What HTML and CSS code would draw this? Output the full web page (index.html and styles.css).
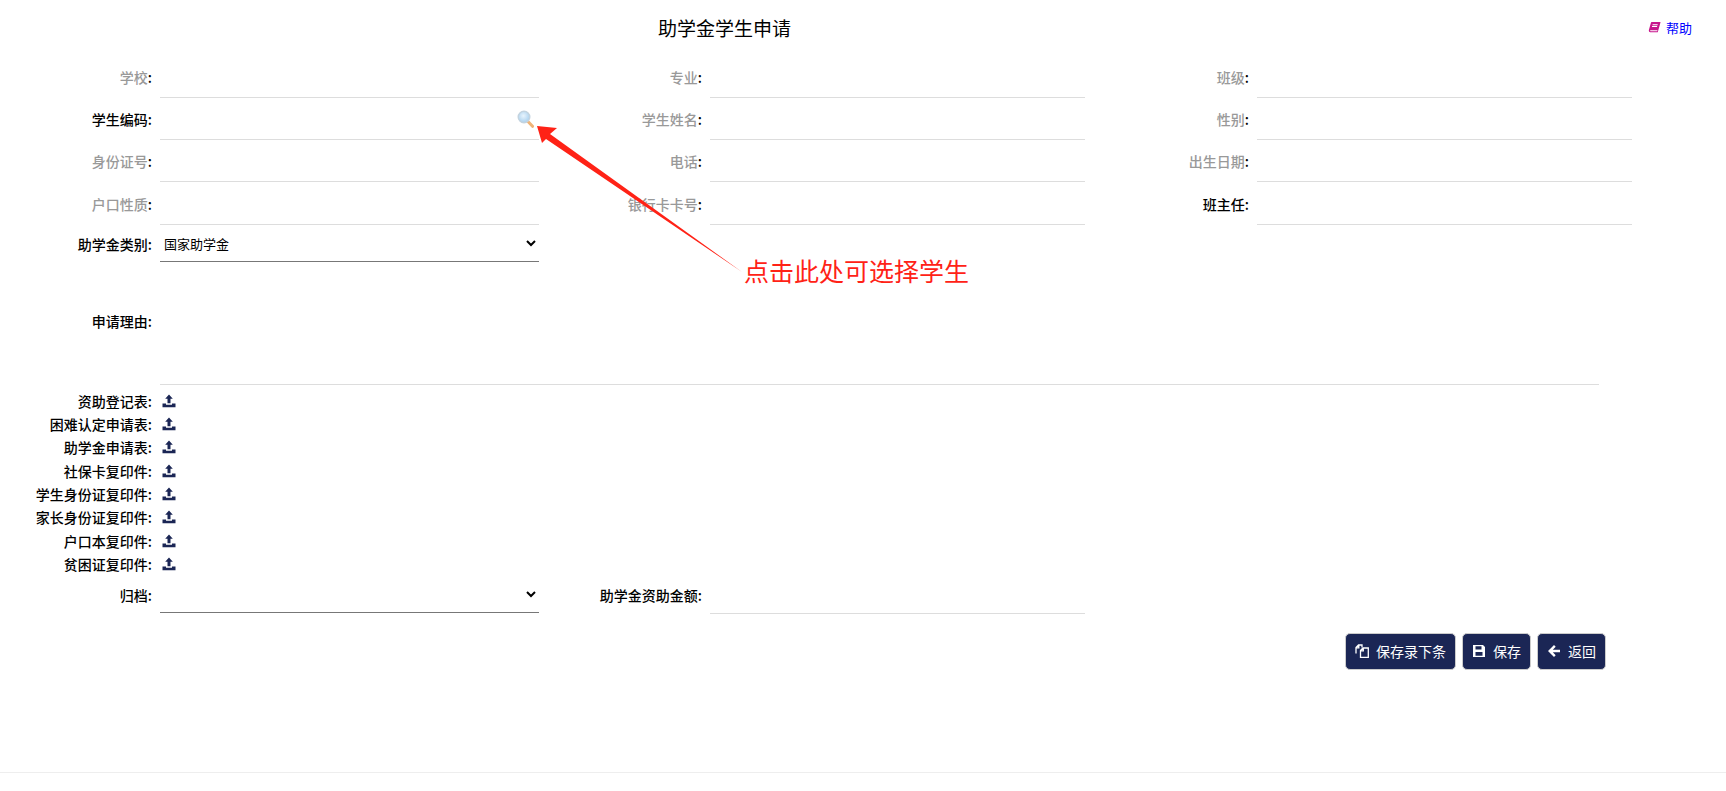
FILE: index.html
```html
<!doctype html>
<html lang="zh-CN">
<head>
    <meta charset="UTF-8">
    <title>助学金学生申请</title>
    <link rel="stylesheet" href="styles.css">
</head>
<body>
<div class="page">
    <div class="head">
        <h1 class="title">助学金学生申请</h1>
        <a class="help" href="#">
            <svg class="help-ico" viewBox="0 0 14 14" width="13" height="13">
                <path fill="#c7158c" d="M4 1h9.500l-.6 2.500-2.400 8.500H2.600C1.200 12 .6 11 1 9.500L3 2.500C3.200 1.600 3.500 1 4 1z"/>
                <path fill="#fff" d="M5 3.500h5.500l-.2 1H4.800zM4.400 5.500h5.500l-.2 1H4.200zM2.400 10h7.800l-.2 1H2.600c-.3-.3-.4-.7-.2-1z"/>
            </svg>
            帮助
        </a>
    </div>

    <div class="grid top">
        <label class="lbl"><span class="dim">学校</span>:</label>
        <div class="val"></div>
        <label class="lbl"><span class="dim">专业</span>:</label>
        <div class="val"></div>
        <label class="lbl"><span class="dim">班级</span>:</label>
        <div class="val"></div>

        <label class="lbl">学生编码:</label>
        <div class="val has-ico">
            <svg class="search-ico" viewBox="0 0 17 18" width="17" height="18">
                <defs>
                    <radialGradient id="glass" cx="45%" cy="40%" r="60%">
                        <stop offset="0" stop-color="#e8f4fd"/>
                        <stop offset="1" stop-color="#a9d0ee"/>
                    </radialGradient>
                </defs>
                <path d="M10.500 11l5 5.300" stroke="#f0b478" stroke-width="3" stroke-linecap="round"/>
                <circle cx="7" cy="7" r="5.800" fill="url(#glass)" stroke="#c3d3df" stroke-width="1.400"/>
            </svg>
        </div>
        <label class="lbl"><span class="dim">学生姓名</span>:</label>
        <div class="val"></div>
        <label class="lbl"><span class="dim">性别</span>:</label>
        <div class="val"></div>

        <label class="lbl"><span class="dim">身份证号</span>:</label>
        <div class="val"></div>
        <label class="lbl"><span class="dim">电话</span>:</label>
        <div class="val"></div>
        <label class="lbl"><span class="dim">出生日期</span>:</label>
        <div class="val"></div>

        <label class="lbl"><span class="dim">户口性质</span>:</label>
        <div class="val"></div>
        <label class="lbl"><span class="dim">银行卡卡号</span>:</label>
        <div class="val"></div>
        <label class="lbl">班主任:</label>
        <div class="val"></div>

        <label class="lbl">助学金类别:</label>
        <select class="sel">
            <option>国家助学金</option>
        </select>
    </div>

    <div class="reason">
        <label class="lbl">申请理由:</label>
        <div class="reason-box"></div>
    </div>

    <div class="uploads">
        <div class="up-row"><label class="lbl">资助登记表:</label><svg class="up-ico" viewBox="0 0 14 14" width="14" height="14"><use href="#up"/></svg></div>
        <div class="up-row"><label class="lbl">困难认定申请表:</label><svg class="up-ico" viewBox="0 0 14 14" width="14" height="14"><use href="#up"/></svg></div>
        <div class="up-row"><label class="lbl">助学金申请表:</label><svg class="up-ico" viewBox="0 0 14 14" width="14" height="14"><use href="#up"/></svg></div>
        <div class="up-row"><label class="lbl">社保卡复印件:</label><svg class="up-ico" viewBox="0 0 14 14" width="14" height="14"><use href="#up"/></svg></div>
        <div class="up-row"><label class="lbl">学生身份证复印件:</label><svg class="up-ico" viewBox="0 0 14 14" width="14" height="14"><use href="#up"/></svg></div>
        <div class="up-row"><label class="lbl">家长身份证复印件:</label><svg class="up-ico" viewBox="0 0 14 14" width="14" height="14"><use href="#up"/></svg></div>
        <div class="up-row"><label class="lbl">户口本复印件:</label><svg class="up-ico" viewBox="0 0 14 14" width="14" height="14"><use href="#up"/></svg></div>
        <div class="up-row"><label class="lbl">贫困证复印件:</label><svg class="up-ico" viewBox="0 0 14 14" width="14" height="14"><use href="#up"/></svg></div>
    </div>

    <div class="grid bottom">
        <label class="lbl">归档:</label>
        <select class="sel">
            <option></option>
        </select>
        <label class="lbl">助学金资助金额:</label>
        <div class="val"></div>
    </div>

    <div class="btns">
        <button class="btn">
            <svg viewBox="0 0 14 14" width="14" height="14" fill="none" stroke="#fff" stroke-width="1.300">
                <path d="M1 9.500V3.500L3.500 1H7v2.500M1 3.800h2.800V1"/>
                <path d="M5.500 6.500L8 4h5.300v9.300H5.500zM5.500 6.800h2.800V4"/>
            </svg>
            保存录下条
        </button>
        <button class="btn">
            <svg viewBox="0 0 14 14" width="14" height="14">
                <path fill="#fff" d="M1 1h10l2 2v10H1z"/>
                <path fill="#1b2655" d="M3.500 2.300h6v3.200h-6zM3.500 8h7v3.800h-7z"/>
            </svg>
            保存
        </button>
        <button class="btn">
            <svg viewBox="0 0 14 14" width="14" height="14" fill="#fff">
                <path d="M7 1l1.700 1.700L5.800 5.700H13v2.600H5.800l2.900 3L7 13 1 7z"/>
            </svg>
            返回
        </button>
    </div>

    <div class="foot"></div>

    <!-- 标注 -->
    <svg class="arrow" viewBox="0 0 230 170" width="230" height="170">
        <polygon fill="#ff2216" points="7,6 27,8 20,14 212,152 16,19 12,23"/>
    </svg>
    <div class="note">点击此处可选择学生</div>
</div>

<svg width="0" height="0" class="defs">
    <symbol id="up" viewBox="0 0 14 14">
        <path fill="#1b2655" d="M7 .5l3.800 4.200H8.500v4.600h-3V4.700H3.200z"/>
        <path fill="#1b2655" d="M.5 9.500h3.500v1.300h6V9.500h3.500v3.800H.5z"/>
    </symbol>
</svg>
</body>
</html>
```

FILE: styles.css
```css
* {
    box-sizing: border-box;
    margin: 0;
    padding: 0;
}

html, body {
    height: 100%;
    overflow: hidden;
}

body {
    background: #fff;
    color: #000;
    font-family: "Noto Sans CJK SC", "Liberation Sans", sans-serif;
    font-size: 14px;
}

.page {
    position: relative;
    height: 791px;
}

.head {
    display: flex;
    justify-content: space-between;
    height: 56px;
    padding: 15px 34px 0 658px;
}

.title {
    font-size: 19px;
    font-weight: 400;
    line-height: 25px;
}

.help {
    display: flex;
    align-items: center;
    gap: 5px;
    height: 25px;
    color: #00f;
    font-size: 13px;
    text-decoration: none;
}

.grid {
    display: grid;
    grid-template-columns: 160px 379px 171px 375px 172px 375px;
}

.top {
    grid-template-rows: 42px 42px 42px 43px 37px;
}

.bottom {
    grid-template-rows: 38px;
    margin-top: 0;
}

.lbl {
    display: flex;
    align-items: center;
    justify-content: flex-end;
    padding-right: 8px;
    font-weight: 500;
    white-space: pre;
}

.dim {
    color: #999;
}

.val {
    display: flex;
    align-items: center;
    justify-content: flex-end;
    border-bottom: 1px solid #ddd;
}

.search-ico {
    margin: 0 5px 0 0;
}

.sel {
    width: 100%;
    height: 37px;
    padding-left: 0;
    border: 0;
    border-bottom: 1px solid #777;
    background: #fff;
    color: #000;
    font-family: inherit;
    font-size: 13px;
    outline: none;
}

.reason {
    display: flex;
    height: 123px;
}

.reason .lbl {
    width: 160px;
    padding-bottom: 6px;
}

.reason-box {
    width: 1439px;
    border-bottom: 1px solid #ddd;
}

.uploads {
    padding-top: 4px;
}

.up-row {
    display: flex;
    align-items: center;
    height: 23.33px;
}

.up-row .lbl {
    width: 160px;
}

.up-ico {
    margin-left: 2px;
}

.btns {
    display: flex;
    justify-content: flex-end;
    gap: 6px;
    padding: 19px 120px 0 0;
}

.btn {
    display: flex;
    align-items: center;
    gap: 7px;
    height: 37px;
    padding: 0 9px;
    border: 1px solid #ccc;
    border-radius: 5px;
    background: #1b2655;
    color: #fff;
    font-family: inherit;
    font-size: 14px;
}

.foot {
    position: absolute;
    left: 0;
    right: 0;
    top: 772px;
    border-top: 1px solid #eee;
}

.arrow {
    position: absolute;
    left: 530px;
    top: 120px;
}

.note {
    position: absolute;
    left: 744px;
    top: 252px;
    color: #ff2216;
    font-size: 25px;
    line-height: 36px;
    white-space: nowrap;
}

.defs {
    position: absolute;
}
```
